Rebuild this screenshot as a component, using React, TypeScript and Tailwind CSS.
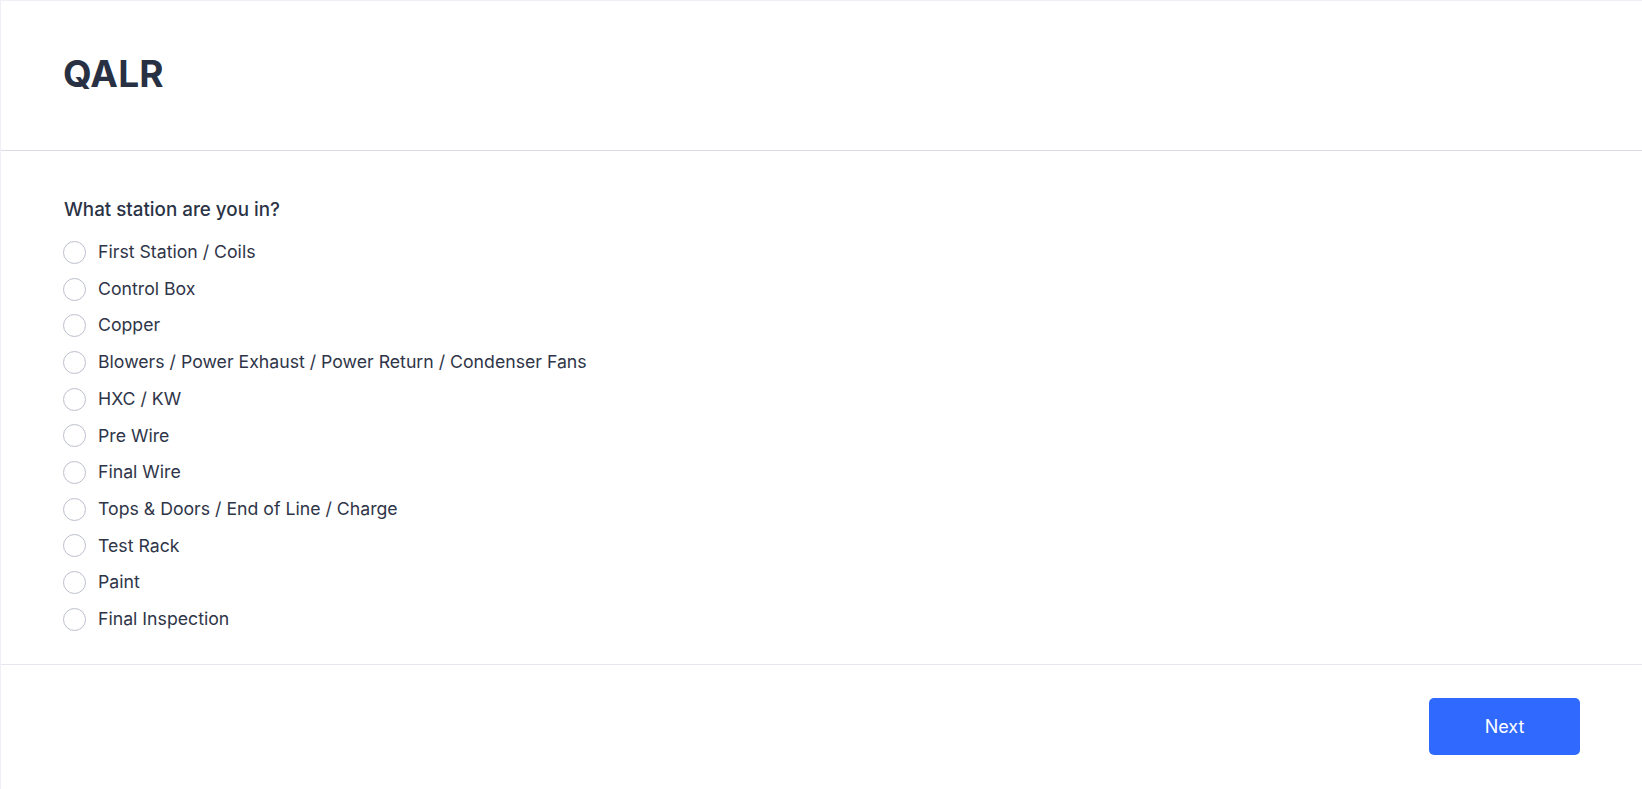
import React from "react";

const stations = [
  "First Station / Coils",
  "Control Box",
  "Copper",
  "Blowers / Power Exhaust / Power Return / Condenser Fans",
  "HXC / KW",
  "Pre Wire",
  "Final Wire",
  "Tops & Doors / End of Line / Charge",
  "Test Rack",
  "Paint",
  "Final Inspection",
];

export default function App() {
  const [selected, setSelected] = React.useState<string | null>(null);

  return (
    <div
      className="min-h-[789px] bg-white border-l border-t border-[#eef0f5] flex flex-col text-[#2b3346]"
      style={{ fontFamily: "Inter, 'Noto Sans', sans-serif" }}
    >
      {/* Header */}
      <div className="h-[150px] border-b border-[#d9dbe4] flex items-center px-[62px] pb-[5px]">
        <h1 className="text-[37px] font-bold leading-none tracking-[0.005em] text-[#283043]">QALR</h1>
      </div>

      {/* Question */}
      <div className="px-[62px] pt-[46px] pb-[26px] border-b border-[#e6e7ee]">
        <p className="ml-[1px] text-[18.8px] font-medium leading-[26px] mb-[11px] text-[#2b3346]">
          What station are you in?
        </p>
        <div className="flex flex-col">
          {stations.map((s) => (
            <label
              key={s}
              className="flex items-center h-[36.7px] cursor-pointer"
              onClick={() => setSelected(s)}
            >
              <span
                className={
                  "w-[23px] h-[23px] rounded-full border flex items-center justify-center " +
                  (selected === s ? "border-[#3069fe]" : "border-[#bcc0cd]")
                }
              >
                {selected === s && <span className="w-[11px] h-[11px] rounded-full bg-[#3069fe]" />}
              </span>
              <span className="ml-[12px] text-[17.7px] text-[#2f3548]">{s}</span>
            </label>
          ))}
        </div>
      </div>

      {/* Footer */}
      <div className="flex justify-end px-[62px] pt-[33px] pb-[33px]">
        <button className="w-[151px] h-[57px] rounded-[5px] bg-[#3069fe] text-white text-[18px] font-normal">
          Next
        </button>
      </div>
    </div>
  );
}
